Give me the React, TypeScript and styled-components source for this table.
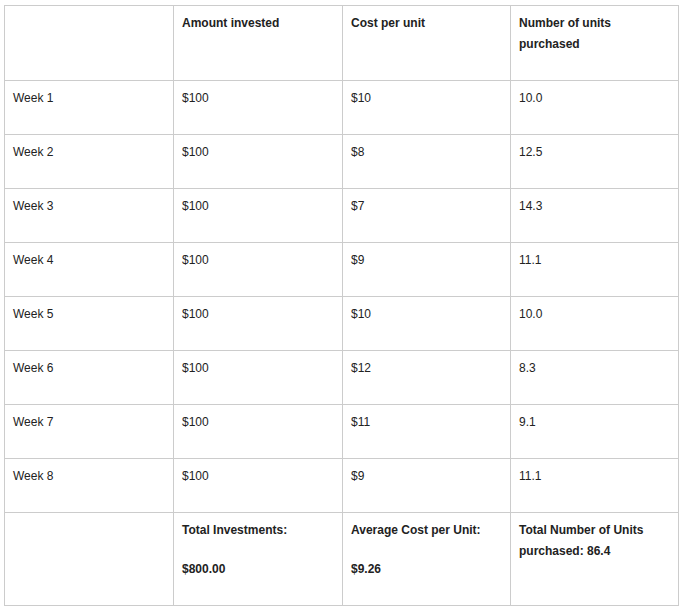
import React from "react";
import styled, { createGlobalStyle } from "styled-components";

const Global = createGlobalStyle`
  html, body { margin: 0; padding: 0; background: #fff; }
  body { font-family: "Liberation Sans", Arial, sans-serif; }
`;

const Page = styled.div`
  padding: 5px 4px;
`;

const Table = styled.table`
  border-collapse: collapse;
  table-layout: fixed;
  width: 675px;
  font-size: 12px;
  color: #222;
`;

const Cell = styled.td<{ $bold?: boolean }>`
  border: 1px solid #ccc;
  padding: 7px 8px;
  vertical-align: top;
  font-weight: ${(p) => (p.$bold ? 700 : 400)};
  color: #222;
`;

const Para = styled.p`
  margin: 0 0 18px;
  line-height: 21px;
`;

const rows = [
  ["Week 1", "$100", "$10", "10.0"],
  ["Week 2", "$100", "$8", "12.5"],
  ["Week 3", "$100", "$7", "14.3"],
  ["Week 4", "$100", "$9", "11.1"],
  ["Week 5", "$100", "$10", "10.0"],
  ["Week 6", "$100", "$12", "8.3"],
  ["Week 7", "$100", "$11", "9.1"],
  ["Week 8", "$100", "$9", "11.1"],
];

export default function App() {
  return (
    <Page>
      <Global />
      <Table>
        <colgroup>
          <col style={{ width: 169 }} />
          <col style={{ width: 169 }} />
          <col style={{ width: 168 }} />
          <col style={{ width: 168 }} />
        </colgroup>
        <tbody>
          <tr>
            <Cell />
            <Cell $bold><Para>Amount invested</Para></Cell>
            <Cell $bold><Para>Cost per unit</Para></Cell>
            <Cell $bold><Para>Number of units purchased</Para></Cell>
          </tr>
          {rows.map((r) => (
            <tr key={r[0]}>
              {r.map((c, i) => (
                <Cell key={i}><Para>{c}</Para></Cell>
              ))}
            </tr>
          ))}
          <tr>
            <Cell />
            <Cell $bold>
              <Para>Total Investments:</Para>
              <Para>$800.00</Para>
            </Cell>
            <Cell $bold>
              <Para>Average Cost per Unit:</Para>
              <Para>$9.26</Para>
            </Cell>
            <Cell $bold>
              <Para>Total Number of Units purchased: 86.4</Para>
            </Cell>
          </tr>
        </tbody>
      </Table>
    </Page>
  );
}
